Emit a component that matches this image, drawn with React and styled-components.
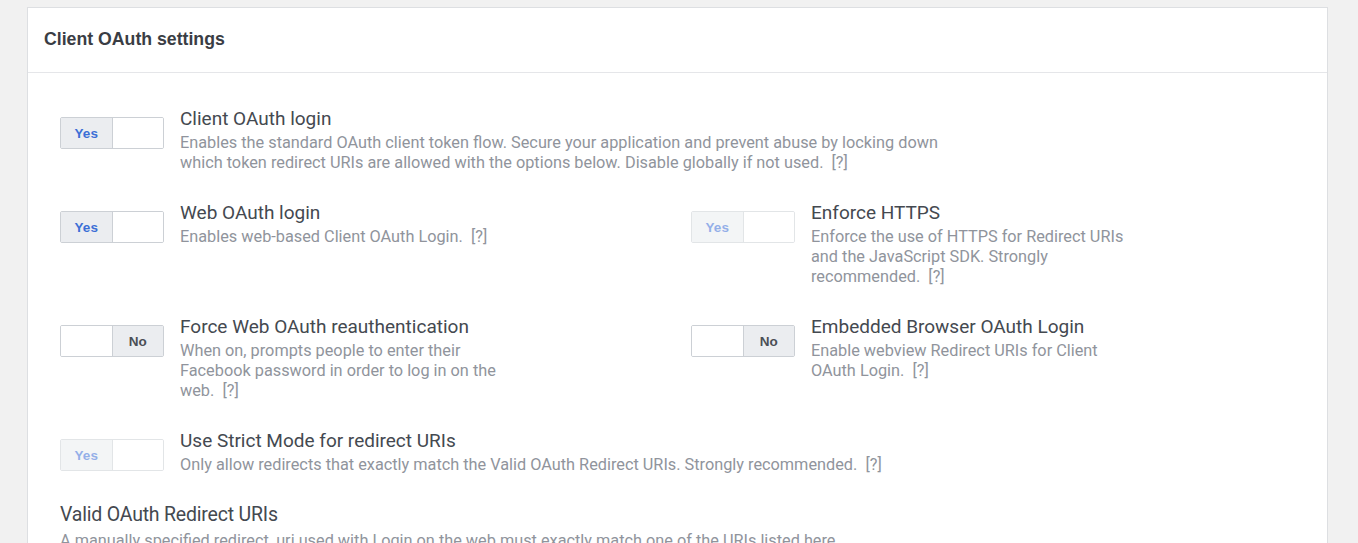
import React from "react";
import styled, { createGlobalStyle } from "styled-components";

const GlobalStyle = createGlobalStyle`
  html, body {
    margin: 0;
    padding: 0;
    background: #f1f1f1;
    font-family: Roboto, "Liberation Sans", Arial, sans-serif;
    -webkit-font-smoothing: antialiased;
  }
`;

const Page = styled.div`
  padding: 7px 30px 0 27px;
  height: 543px;
  box-sizing: border-box;
  overflow: hidden;
`;

const Card = styled.section`
  background: #fff;
  border: 1px solid #dddfe2;
  border-bottom: none;
`;

const CardHeader = styled.header`
  height: 64px;
  display: flex;
  align-items: center;
  padding: 0 16px;
  border-bottom: 1px solid #e5e6e9;
`;

const CardTitle = styled.h2`
  margin: 0 0 2px;
  font-family: "Liberation Sans", Arial, sans-serif;
  font-size: 17.7px;
  font-weight: 700;
  color: #3a3d44;
`;

const CardBody = styled.div`
  padding: 32px 32px 0 32px;
  display: flex;
  flex-direction: column;
  gap: 26px;
`;

const Columns = styled.div`
  display: grid;
  grid-template-columns: 631px 1fr;
`;

const Setting = styled.div`
  display: flex;
  align-items: flex-start;
  gap: 16px;
`;

const Toggle = styled.div`
  margin-top: 12px;
  flex: 0 0 auto;
  width: 104px;
  height: 32px;
  box-sizing: border-box;
  border: 1px solid #ccd0d5;
  border-radius: 2px;
  display: flex;
  overflow: hidden;
  opacity: ${(p) => (p.$disabled ? 0.55 : 1)};
`;

const Half = styled.div`
  flex: 1;
  display: flex;
  align-items: center;
  justify-content: center;
  font-family: "Liberation Sans", Arial, sans-serif;
  font-size: 13.5px;
  font-weight: 700;
  color: ${(p) => (p.$yes ? "#3b6fd6" : "#4b4f56")};
  background: ${(p) => (p.$active ? "#ebedf0" : "#fff")};
  & + & {
    border-left: 1px solid #ccd0d5;
  }
`;

const Text = styled.div`
  max-width: ${(p) => (p.$narrow ? "322px" : "none")};
`;

const Title = styled.div`
  font-size: 19px;
  line-height: 28px;
  color: #444950;
`;

const Desc = styled.div`
  font-size: 16.3px;
  line-height: 20px;
  color: #90949c;
`;

const SectionTitle = styled.div`
  font-size: 19.5px;
  line-height: 28px;
  color: #444950;
  letter-spacing: -0.2px;
`;

const SectionDesc = styled.div`
  margin-top: 2px;
  font-size: 16.3px;
  line-height: 20px;
  color: #90949c;
  white-space: nowrap;
`;

const SwitchBox = ({ on, disabled }) => (
  <Toggle $disabled={disabled}>
    {on ? (
      <>
        <Half $yes $active>Yes</Half>
        <Half />
      </>
    ) : (
      <>
        <Half />
        <Half $active>No</Half>
      </>
    )}
  </Toggle>
);

const Item = ({ on, disabled, title, desc, narrow }) => (
  <Setting>
    <SwitchBox on={on} disabled={disabled} />
    <Text $narrow={narrow}>
      <Title>{title}</Title>
      <Desc>
        {desc}
        {"\u00a0 [?]"}
      </Desc>
    </Text>
  </Setting>
);

export default function App() {
  return (
    <>
      <GlobalStyle />
      <Page>
        <Card>
          <CardHeader>
            <CardTitle>Client OAuth settings</CardTitle>
          </CardHeader>
          <CardBody>
            <Item
              on
              title="Client OAuth login"
              desc={
                <>
                  Enables the standard OAuth client token flow. Secure your application and prevent abuse by locking down
                  <br />
                  which token redirect URIs are allowed with the options below. Disable globally if not used.
                </>
              }
            />
            <Columns>
              <Item on narrow title="Web OAuth login" desc="Enables web-based Client OAuth Login." />
              <Item
                on
                disabled
                narrow
                title="Enforce HTTPS"
                desc="Enforce the use of HTTPS for Redirect URIs and the JavaScript SDK. Strongly recommended."
              />
            </Columns>
            <Columns>
              <Item
                narrow
                title="Force Web OAuth reauthentication"
                desc="When on, prompts people to enter their Facebook password in order to log in on the web."
              />
              <Item
                narrow
                title="Embedded Browser OAuth Login"
                desc="Enable webview Redirect URIs for Client OAuth Login."
              />
            </Columns>
            <Item
              on
              disabled
              title="Use Strict Mode for redirect URIs"
              desc="Only allow redirects that exactly match the Valid OAuth Redirect URIs. Strongly recommended."
            />
            <div>
              <SectionTitle>Valid OAuth Redirect URIs</SectionTitle>
              <SectionDesc>
                A manually specified redirect_uri used with Login on the web must exactly match one of the URIs listed here.
              </SectionDesc>
            </div>
          </CardBody>
        </Card>
      </Page>
    </>
  );
}
